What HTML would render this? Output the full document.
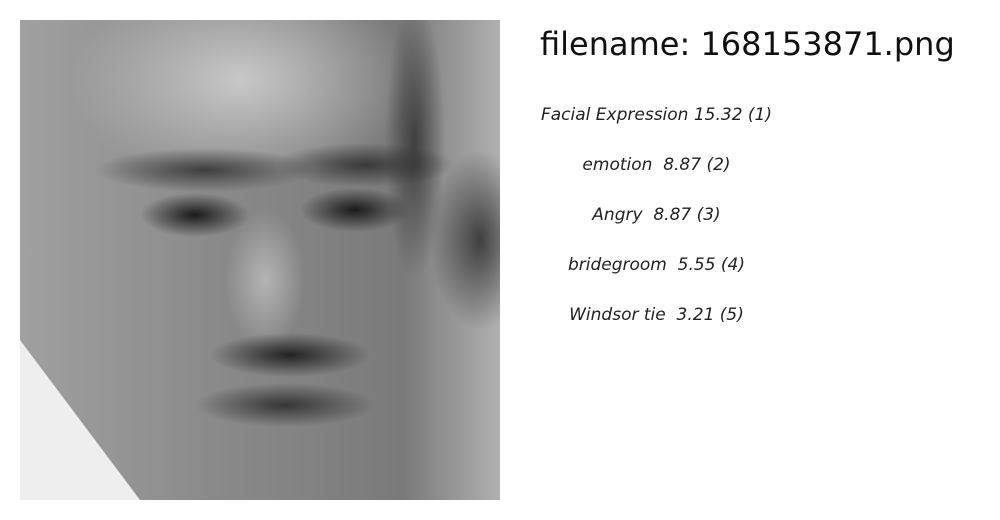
<!DOCTYPE html>
<html><head><style>
html,body{margin:0;padding:0;}
body{width:1000px;height:520px;background:#fff;overflow:hidden;position:relative;font-family:"DejaVu Sans","Liberation Sans",sans-serif;}
#img{position:absolute;left:20px;top:20px;width:480px;height:480px;overflow:hidden;
background:
radial-gradient(ellipse 55px 22px at 175px 195px,#1a1a1a,rgba(30,30,30,0) ),
radial-gradient(ellipse 55px 22px at 335px 190px,#1a1a1a,rgba(30,30,30,0) ),
radial-gradient(ellipse 110px 22px at 185px 150px,rgba(40,40,40,.8),rgba(40,40,40,0)),
radial-gradient(ellipse 90px 22px at 345px 145px,rgba(40,40,40,.8),rgba(40,40,40,0)),
radial-gradient(ellipse 80px 22px at 270px 335px,#222,rgba(30,30,30,0)),
radial-gradient(ellipse 90px 22px at 265px 385px,rgba(40,40,40,.85),rgba(40,40,40,0)),
radial-gradient(ellipse 40px 70px at 245px 260px,rgba(200,200,200,.7),rgba(200,200,200,0)),
radial-gradient(ellipse 50px 90px at 460px 220px,rgba(20,20,20,.7),rgba(20,20,20,0)),
radial-gradient(ellipse 30px 140px at 395px 120px,rgba(20,20,20,.6),rgba(20,20,20,0)),
radial-gradient(ellipse 170px 110px at 220px 60px,#c8c8c8,rgba(200,200,200,0)),
linear-gradient(to right,#a0a0a0 0%,#8a8a8a 40%,#7a7a7a 80%,#b0b0b0 100%);}
#collar{position:absolute;left:0;top:0;width:480px;height:480px;background:#eee;clip-path:polygon(0 320px,120px 480px,0 480px);}
h1{position:absolute;left:540px;top:24px;margin:0;font-weight:normal;font-size:32px;line-height:40px;color:#111;white-space:nowrap}
.l{position:absolute;left:540px;width:233px;text-align:center;font-style:italic;font-size:17px;line-height:24px;color:#222;white-space:nowrap}
</style></head><body>
<div id="img"><div id="collar"></div></div>
<h1>filename: 168153871.png</h1>
<div class="l" style="top:103px">Facial Expression 15.32 (1)</div>
<div class="l" style="top:153px">emotion&nbsp; 8.87 (2)</div>
<div class="l" style="top:203px">Angry&nbsp; 8.87 (3)</div>
<div class="l" style="top:253px">bridegroom&nbsp; 5.55 (4)</div>
<div class="l" style="top:303px">Windsor tie&nbsp; 3.21 (5)</div>
</body></html>
